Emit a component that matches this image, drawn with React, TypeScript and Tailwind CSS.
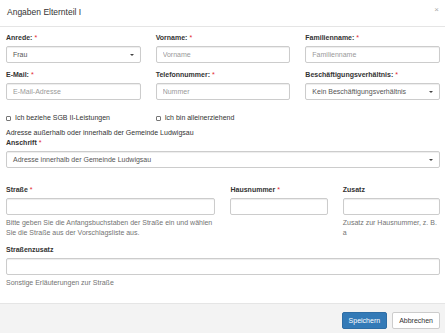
import React from 'react';

const inputCls =
  'block w-full h-[17px] border border-[#ccc] rounded-[2px] bg-white px-[6px] text-[7px] text-[#555] placeholder:text-[#999] outline-none shadow-[inset_0_1px_1px_rgba(0,0,0,0.075)]';

function Label({ text, required }: { text: string; required?: boolean }) {
  return (
    <label className="block h-[10px] mb-[3px] font-bold text-[#333]">
      {text}
      {required && <span className="text-[#e3262e] font-normal"> *</span>}
    </label>
  );
}

function SelectBox({ value }: { value: string }) {
  return (
    <div className="relative flex items-center h-[17px] border border-[#ccc] rounded-[2px] bg-white pl-[6px] text-[#555] shadow-[inset_0_1px_1px_rgba(0,0,0,0.075)]">
      <span>{value}</span>
      <span className="absolute right-[6px] top-[7px] w-0 h-0 border-l-[2px] border-r-[2px] border-t-[2.5px] border-l-transparent border-r-transparent border-t-[#444]" />
    </div>
  );
}

function Check({ text }: { text: string }) {
  return (
    <div className="flex items-center gap-[4px] text-[#333]">
      <span className="w-[5px] h-[5px] border border-[#767676] rounded-[1px] bg-white" />
      <span>{text}</span>
    </div>
  );
}

export default function App() {
  return (
    <div className="w-[445px] h-[333px] overflow-hidden bg-white font-['Liberation_Sans',Arial,sans-serif] text-[7px] leading-[10px] text-[#333]">
      {/* Kopfzeile */}
      <div className="relative h-[27px] border-b border-[#e5e5e5] px-[7px] pt-[7px]">
        <h4 className="text-[8.5px] leading-[11px] text-[#333]">Angaben Elternteil I</h4>
        <span className="absolute right-[6px] top-[5px] text-[8px] leading-[10px] text-[#aaa]">×</span>
      </div>

      {/* Formular */}
      <div className="pt-[6px] pl-[6px] pr-[5px] h-[276px]">
        <div className="grid grid-cols-12 gap-x-[15px]">
          <div className="col-span-4 mb-[7px]">
            <Label text="Anrede:" required />
            <SelectBox value="Frau" />
          </div>
          <div className="col-span-4 mb-[7px]">
            <Label text="Vorname:" required />
            <input className={inputCls} placeholder="Vorname" />
          </div>
          <div className="col-span-4 mb-[7px]">
            <Label text="Familienname:" required />
            <input className={inputCls} placeholder="Familienname" />
          </div>

          <div className="col-span-4 mb-[7px]">
            <Label text="E-Mail:" required />
            <input className={inputCls} placeholder="E-Mail-Adresse" />
          </div>
          <div className="col-span-4 mb-[7px]">
            <Label text="Telefonnummer:" required />
            <input className={inputCls} placeholder="Nummer" />
          </div>
          <div className="col-span-4 mb-[7px]">
            <Label text="Beschäftigungsverhältnis:" required />
            <SelectBox value="Kein Beschäftigungsverhältnis" />
          </div>

          <div className="col-span-4 mt-[6px] mb-[5px]">
            <Check text="Ich beziehe SGB II-Leistungen" />
          </div>
          <div className="col-span-4 mt-[6px] mb-[5px]">
            <Check text="Ich bin alleinerziehend" />
          </div>
          <div className="col-span-4" />

          <div className="col-span-12 mb-[7px]">
            <p className="text-[#333]">Adresse außerhalb oder innerhalb der Gemeinde Ludwigsau</p>
            <Label text="Anschrift" required />
            <SelectBox value="Adresse innerhalb der Gemeinde Ludwigsau" />
          </div>

          <div className="col-span-6 mt-[10px] mb-[7.5px]">
            <Label text="Straße" required />
            <input className={inputCls} />
            <p className="mt-[2.5px] text-[#737373]">
              Bitte geben Sie die Anfangsbuchstaben der Straße ein und wählen Sie die Straße aus der Vorschlagsliste aus.
            </p>
          </div>
          <div className="col-span-3 mt-[10px] mb-[7.5px]">
            <Label text="Hausnummer" required />
            <input className={inputCls} />
          </div>
          <div className="col-span-3 mt-[10px] mb-[7.5px]">
            <Label text="Zusatz" />
            <input className={inputCls} />
            <p className="mt-[2.5px] text-[#737373]">Zusatz zur Hausnummer, z. B. a</p>
          </div>

          <div className="col-span-12">
            <Label text="Straßenzusatz" />
            <input className={inputCls} />
            <p className="mt-[2.5px] text-[#737373]">Sonstige Erläuterungen zur Straße</p>
          </div>
        </div>
      </div>

      {/* Fußzeile */}
      <div className="h-[40px] border-t border-[#e5e5e5] bg-[#f3f3f3] flex justify-end items-start gap-[5px] pt-[8px] pr-[5px]">
        <button className="h-[17px] px-[6px] rounded-[2px] border border-[#2e6da4] bg-[#337ab7] text-white text-[7px]">
          Speichern
        </button>
        <button className="h-[17px] px-[6px] rounded-[2px] border border-[#ccc] bg-white text-[#333] text-[7px]">
          Abbrechen
        </button>
      </div>
    </div>
  );
}
